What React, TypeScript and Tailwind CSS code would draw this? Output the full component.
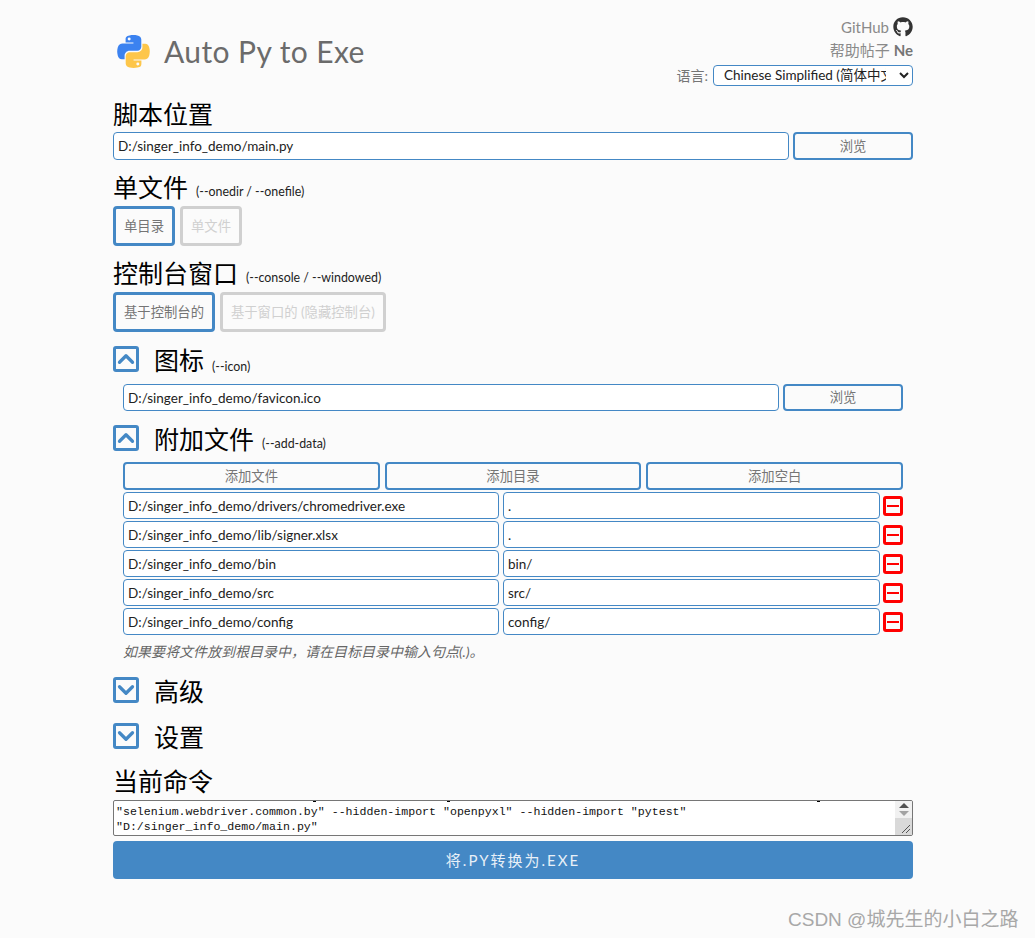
import React from 'react';
import { ChevronUp, ChevronDown } from 'lucide-react';
import { FaGithub } from 'react-icons/fa';

const FONT = "font-['Lato','Noto_Sans_CJK_SC',sans-serif]";

const dataFiles = [
  { src: 'D:/singer_info_demo/drivers/chromedriver.exe', dest: '.' },
  { src: 'D:/singer_info_demo/lib/signer.xlsx', dest: '.' },
  { src: 'D:/singer_info_demo/bin', dest: 'bin/' },
  { src: 'D:/singer_info_demo/src', dest: 'src/' },
  { src: 'D:/singer_info_demo/config', dest: 'config/' },
];

const PythonLogo = () => (
  <svg viewBox="0 0 110.4 110" className="w-[33px] h-[33px]">
    <path
      fill="#3b82f0"
      d="M54.9 0c-4.6 0-9 .4-12.8 1.1C30.8 3.1 28.8 7.2 28.8 14.9v10.2h26.2v3.4H18.9c-7.6 0-14.3 4.6-16.4 13.3C.1 51.8.1 58 2.5 68.2c1.9 7.6 6.3 13 13.9 13h9V69.1c0-8.8 7.6-16.5 16.6-16.5h26.2c7.3 0 13.1-6 13.1-13.3V14.9c0-7.1-6-12.4-13.1-13.6C63.6.4 59.5 0 54.9 0Zm-14.2 8.2a5 5 0 1 1 0 10 5 5 0 0 1 0-10Z"
    />
    <path
      fill="#fdc64a"
      transform="rotate(180 55.2 55)"
      d="M54.9 0c-4.6 0-9 .4-12.8 1.1C30.8 3.1 28.8 7.2 28.8 14.9v10.2h26.2v3.4H18.9c-7.6 0-14.3 4.6-16.4 13.3C.1 51.8.1 58 2.5 68.2c1.9 7.6 6.3 13 13.9 13h9V69.1c0-8.8 7.6-16.5 16.6-16.5h26.2c7.3 0 13.1-6 13.1-13.3V14.9c0-7.1-6-12.4-13.1-13.6C63.6.4 59.5 0 54.9 0Zm-14.2 8.2a5 5 0 1 1 0 10 5 5 0 0 1 0-10Z"
    />
  </svg>
);

const Field = ({ value, className = '' }: { value: string; className?: string }) => (
  <div className={`flex items-center bg-white border border-[#4488c5] rounded-[4px] pl-1 pt-px text-[13.5px] text-[#222] ${className}`}>
    {value}
  </div>
);

const OutlineButton = ({ label, className = '' }: { label: string; className?: string }) => (
  <button className={`border-2 border-[#4488c5] rounded-[4px] bg-[#fbfbfb] pt-px text-[13.33px] text-[#757575] ${className}`}>
    {label}
  </button>
);

const ToggleButton = ({ label, active }: { label: string; active: boolean }) => (
  <button
    className={`h-[40px] px-[8px] pt-px border-[3px] rounded-[4px] bg-[#fbfbfb] text-[13.33px] ${
      active ? 'border-[#4488c5] text-[#757575]' : 'border-[#d0d0d0] text-[#d0d0d0]'
    }`}
  >
    {label}
  </button>
);

const Heading = ({ title, flag, flagClass = 'mt-[8px]' }: { title: string; flag?: string; flagClass?: string }) => (
  <div className="h-[30px] flex items-center text-[25px] leading-[30px] text-black">
    <span className="relative -top-px">{title}</span>
    {flag && <span className={`ml-2 text-[12.4px] text-[#222] ${flagClass}`}>{flag}</span>}
  </div>
);

const SectionHeader = ({ title, flag, flagClass, open }: { title: string; flag?: string; flagClass?: string; open: boolean }) => (
  <div className="h-[30px] flex items-start">
    <div className="w-[26px] h-[26px] flex items-center justify-center border-[3px] border-[#4488c5] rounded-[3px] text-[#4488c5]">
      {open ? (
        <ChevronUp size={26} strokeWidth={3} className="shrink-0" />
      ) : (
        <ChevronDown size={26} strokeWidth={3} className="shrink-0" />
      )}
    </div>
    <div className="ml-[15px]">
      <Heading title={title} flag={flag} flagClass={flagClass} />
    </div>
  </div>
);

const RemoveButton = () => (
  <div className="w-[20px] h-[20px] flex items-center justify-center border-[3px] border-[#ff0000] rounded-[3px]">
    <div className="w-[12px] h-[2px] shrink-0 bg-[#ff0000]" />
  </div>
);

const App: React.FC = () => {
  return (
    <div className={`relative h-[938px] overflow-hidden bg-[#fbfbfb] ${FONT}`}>
      <div className="ml-[113px] w-[800px] flex flex-col">
        <header className="h-[100px] flex justify-between">
          <div className="flex items-center h-[103px] gap-[14px] pl-[4px]">
            <PythonLogo />
            <span className="text-[30px] text-[#6b6b6b] tracking-[0.4px]">Auto Py to Exe</span>
          </div>
          <div className="flex flex-col items-end pt-[16px] text-[15px] text-[#8a8a8a]">
            <div className="h-[22px] flex items-center gap-1">
              GitHub <FaGithub size={20} className="text-[#333]" />
            </div>
            <div className="h-[24px] flex items-center gap-1">
              帮助帖子 <span className="font-bold text-[#757575]">Ne</span>
            </div>
            <div className="h-[24px] mt-[1px] flex items-center gap-[5px] text-[14px] text-[#757575]">
              语言:
              <select className="w-[200px] h-[21px] bg-white border border-[#4488c5] rounded-[4px] text-[13.5px] text-[#222] pl-[6px] pr-[10px]">
                <option>Chinese Simplified (简体中文)</option>
              </select>
            </div>
          </div>
        </header>

        <Heading title="脚本位置" />
        <div className="mt-[2px] flex gap-1">
          <Field value="D:/singer_info_demo/main.py" className="flex-1 h-[28px]" />
          <OutlineButton label="浏览" className="w-[120px] h-[28px]" />
        </div>

        <div className="mt-[13px]">
          <Heading title="单文件" flag="(--onedir / --onefile)" />
        </div>
        <div className="mt-[3px] flex gap-[5px]">
          <ToggleButton label="单目录" active />
          <ToggleButton label="单文件" active={false} />
        </div>

        <div className="mt-[13px]">
          <Heading title="控制台窗口" flag="(--console / --windowed)" />
        </div>
        <div className="mt-[3px] flex gap-[5px]">
          <ToggleButton label="基于控制台的" active />
          <ToggleButton label="基于窗口的 (隐藏控制台)" active={false} />
        </div>

        <div className="mt-[14px]">
          <SectionHeader title="图标" flag="(--icon)" flagClass="mt-[12px]" open />
        </div>
        <div className="mt-[8px] ml-[10px] mr-[10px] flex gap-1">
          <Field value="D:/singer_info_demo/favicon.ico" className="flex-1 h-[27px]" />
          <OutlineButton label="浏览" className="w-[120px] h-[27px]" />
        </div>

        <div className="mt-[14px]">
          <SectionHeader title="附加文件" flag="(--add-data)" open />
        </div>
        <div className="mt-[7px] mx-[10px] flex flex-col">
          <div className="grid grid-cols-3 gap-[5px]">
            <OutlineButton label="添加文件" className="h-[28px]" />
            <OutlineButton label="添加目录" className="h-[28px]" />
            <OutlineButton label="添加空白" className="h-[28px]" />
          </div>
          <div className="mt-[2px] flex flex-col gap-[2px]">
            {dataFiles.map((file) => (
              <div key={file.src} className="flex items-center">
                <Field value={file.src} className="w-[376px] h-[27px]" />
                <Field value={file.dest} className="ml-[4px] w-[377px] h-[27px]" />
                <div className="ml-[3px]">
                  <RemoveButton />
                </div>
              </div>
            ))}
          </div>
          <p className="mt-[7px] h-[20px] leading-[20px] text-[14px] italic text-[#666]">
            如果要将文件放到根目录中，请在目标目录中输入句点(.)。
          </p>
        </div>

        <div className="mt-[15px]">
          <SectionHeader title="高级" open={false} />
        </div>
        <div className="mt-[16px]">
          <SectionHeader title="设置" open={false} />
        </div>

        <div className="mt-[14px]">
          <Heading title="当前命令" />
        </div>
        <div className="relative mt-[3px] h-[36px] overflow-hidden bg-white border border-[#767676] rounded-[2px] pl-[2px] pt-[3px] font-['Liberation_Mono','DejaVu_Sans_Mono',monospace] text-[11.6px] leading-[15px] text-[#111]">
          <div>"selenium.webdriver.common.by" --hidden-import "openpyxl" --hidden-import "pytest"</div>
          <div>"D:/singer_info_demo/main.py"</div>
          <div className="absolute top-0 left-[199px] w-[3px] h-px bg-black" />
          <div className="absolute top-0 left-[333px] w-[3px] h-px bg-black" />
          <div className="absolute top-0 left-[703px] w-[3px] h-px bg-black" />
          <div className="absolute top-0 bottom-0 right-0 w-[17px] bg-[#d9d9d9] flex flex-col">
            <div className="h-[17px] bg-[#f1f1f1] flex flex-col items-center justify-center gap-[3px]">
              <svg viewBox="0 0 10 5" className="w-[10px] h-[5px]">
                <path d="M0 5 5 0l5 5Z" fill="#505050" />
              </svg>
              <svg viewBox="0 0 10 5" className="w-[10px] h-[5px]">
                <path d="M0 0h10L5 5Z" fill="#a3a3a3" />
              </svg>
            </div>
            <svg viewBox="0 0 17 17" className="mt-auto w-[17px] h-[17px]">
              <path d="M7 15 15 7M11 15l4-4" stroke="#555" fill="none" />
            </svg>
          </div>
        </div>
        <button className="mt-[5px] h-[38px] rounded-[4px] bg-[#4488c5] text-[#e8f0f8] text-[15px] tracking-[2px]">
          将.PY转换为.EXE
        </button>
      </div>

      <div className="absolute top-[906px] left-[788px] font-['Liberation_Sans','Noto_Sans_CJK_SC',sans-serif] text-[19px] text-[#a8a8a8]">
        CSDN @城先生的小白之路
      </div>
    </div>
  );
};

export default App;
